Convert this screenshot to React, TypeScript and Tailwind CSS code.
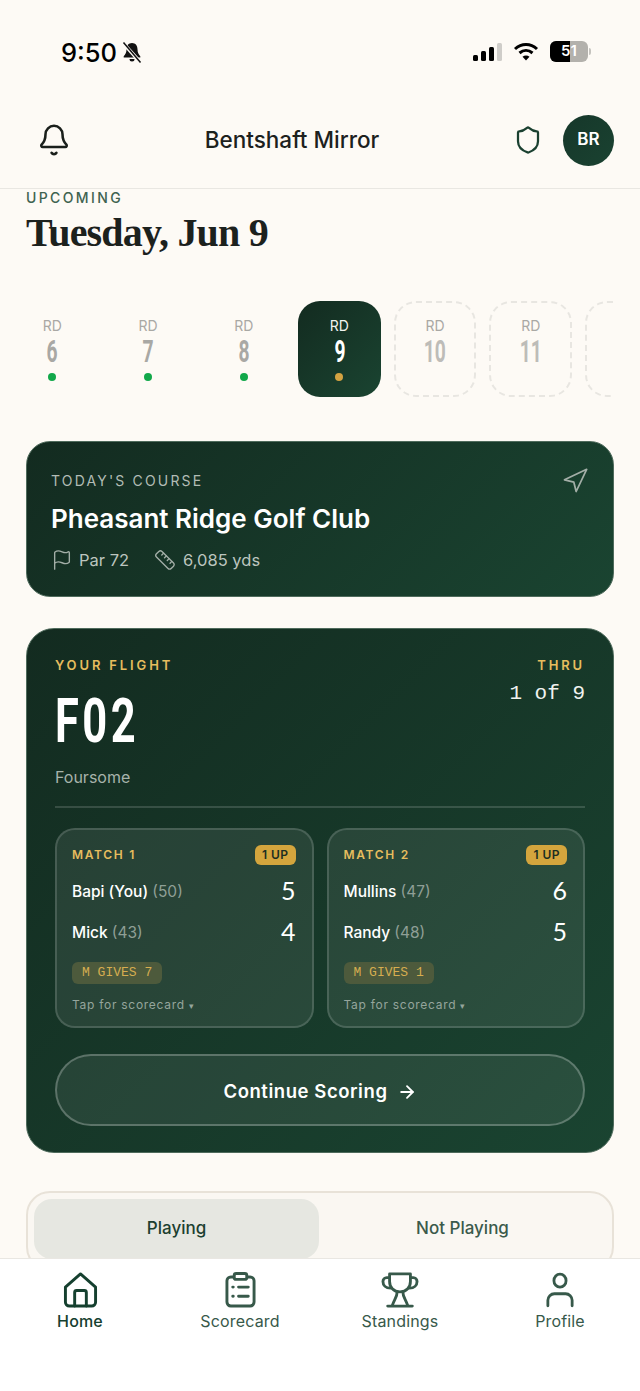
import React from 'react';
import { Bell, Shield, Flag, Ruler, Navigation, ArrowRight } from 'lucide-react';

const rounds = [
  { n: '6', state: 'done' },
  { n: '7', state: 'done' },
  { n: '8', state: 'done' },
  { n: '9', state: 'active' },
  { n: '10', state: 'future' },
  { n: '11', state: 'future' },
  { n: '', state: 'future' },
];

const StatusBar = () => (
  <div className="flex h-[90px] shrink-0 items-start justify-between pl-[61px] pr-[49px] pt-[38px]">
    <div className="flex items-center gap-[5px] text-black">
      <span className="text-[25.5px] font-medium leading-[30px] font-['Inter',sans-serif]">9:50</span>
      <svg width="20" height="22" viewBox="0 0 20 22" fill="#111" stroke="none">
        <path d="M10 1c-3.600 0-5.500 2.800-5.500 6.200 0 3.600-1.400 5.400-2.800 7v1.300h16.600v-1.300c-1.400-1.600-2.800-3.400-2.800-7C15.500 3.800 13.600 1 10 1z" />
        <path d="M7.500 17h5a2.500 2.500 0 0 1-5 0z" />
        <path d="M1.500 1.500l17 19" stroke="#fdfaf5" strokeWidth="3.500" />
        <path d="M1.500 0.500l17 20" stroke="#111" strokeWidth="1.500" />
      </svg>
    </div>
    <div className="flex items-center gap-[10px] pt-[3px]">
      <svg width="30" height="18" viewBox="0 0 30 18">
        <rect x="0" y="12" width="5" height="6" rx="1.500" fill="#000" />
        <rect x="8" y="8" width="5" height="10" rx="1.500" fill="#000" />
        <rect x="16" y="4" width="5" height="14" rx="1.500" fill="#000" />
        <rect x="24" y="0" width="5" height="18" rx="1.500" fill="#cfcdc9" />
      </svg>
      <svg width="26" height="19" viewBox="0 0 26 19" fill="none" stroke="#000" strokeWidth="3">
        <path d="M2 7c6.500-6 15.500-6 22 0" />
        <path d="M6.500 11c4-3.500 9-3.500 13 0" />
        <path d="M13 18.500l-3.500-3.800c2-1.600 5-1.600 7 0z" fill="#000" stroke="none" />
      </svg>
      <div className="flex items-center gap-[1px]">
        <div className="relative ml-[1px] flex h-[21px] w-[38px] overflow-hidden rounded-[6px] bg-[#b3b1ac]">
          <div className="h-full w-[20px] bg-black" />
          <span className="absolute inset-0 flex items-center justify-center text-[15px] font-semibold text-white font-['Inter',sans-serif]">51</span>
        </div>
        <div className="h-[7px] w-[2px] rounded-r bg-[#c5c3be]" />
      </div>
    </div>
  </div>
);

const Header = () => (
  <div className="flex h-[99px] shrink-0 items-center justify-between border-b border-[#e9e7e2] pl-[37px] pr-[26px] pt-[2px]">
    <Bell size={34} strokeWidth={1.8} className="text-[#1a1f1b]" />
    <div className="mt-[1px] text-[22.5px] font-medium leading-none text-[#1c211d]">Bentshaft Mirror</div>
    <div className="flex items-center gap-[20px]">
      <Shield size={30} strokeWidth={1.8} className="text-[#1a4030]" />
      <div className="flex h-[51px] w-[51px] items-center justify-center rounded-full bg-[linear-gradient(135deg,#16372a,#1a4231)] text-[17px] font-semibold text-white">BR</div>
    </div>
  </div>
);

const Rounds = () => (
  <div className="mr-[26px] mt-[44px] flex gap-[13px] overflow-hidden pl-[11px]">
    {rounds.map((r, i) => (
      <div
        key={i}
        className={
          r.state === 'active'
            ? 'flex h-[96px] w-[82.700px] shrink-0 flex-col items-center rounded-[22px] bg-[linear-gradient(135deg,#132b20,#1a4431)] pt-[16px]'
            : r.state === 'future'
              ? 'flex h-[96px] w-[82.700px] shrink-0 flex-col items-center rounded-[22px] border-2 border-dashed border-[#e8e6e1] pt-[14px]'
              : 'flex h-[96px] w-[82.700px] shrink-0 flex-col items-center pt-[16px]'
        }
      >
        {r.n !== '' && (
          <>
            <div className={`text-[14px] leading-[17px] ${r.state === 'active' ? 'text-[#f1f3f0]' : 'text-[#a9a8a4]'}`}>RD</div>
            <div className={`mt-[2px] scale-x-[0.62] text-[31px] font-bold leading-[32px] font-['Roboto',sans-serif] ${r.state === 'active' ? 'text-white' : r.state === 'future' ? 'text-[#bdbcb8]' : 'text-[#a9a8a4]'}`}>{r.n}</div>
          </>
        )}
        {r.state === 'done' && <div className="mt-[5px] h-[8px] w-[8px] rounded-full bg-[#12a84a]" />}
        {r.state === 'active' && <div className="mt-[5px] h-[8px] w-[8px] rounded-full bg-[#d4a342]" />}
      </div>
    ))}
  </div>
);

const CourseCard = () => (
  <div className="mx-[26px] mt-[44px] flex h-[156px] justify-between rounded-[24px] border border-[#4f6b5c] bg-[linear-gradient(135deg,#132b20,#1a4431)] pl-[24px] pr-[26px] pt-[30px]">
    <div>
      <div className="text-[14px] leading-[18px] tracking-[0.155em] text-[#b2bcb5]">TODAY'S COURSE</div>
      <div className="mt-[13px] text-[26px] font-semibold leading-[32px] text-white">Pheasant Ridge Golf Club</div>
      <div className="mt-[13px] flex items-center text-[16.500px] leading-[24px] text-[#bcc5bf]">
        <Flag size={22} strokeWidth={1.5} className="mr-[6px] text-[#a3aea7]" />
        <span>Par 72</span>
        <Ruler size={22} strokeWidth={1.5} className="ml-[25px] mr-[7px] text-[#a3aea7]" />
        <span>6,085 yds</span>
      </div>
    </div>
    <Navigation size={28} strokeWidth={1.5} className="-mr-[2px] -mt-[5px] text-[#a3aea7]" />
  </div>
);

const Player = ({ name, hcp, score, top }: { name: string; hcp: string; score: string; top: string }) => (
  <div className={`flex items-start justify-between ${top}`}>
    <div className="mt-[5px] text-[15.500px] font-medium leading-[24px] text-white">
      {name} <span className="font-normal text-[#8f9f96]">{hcp}</span>
    </div>
    <div className="text-[25px] leading-[30px] text-white font-['Lato',sans-serif]">{score}</div>
  </div>
);

const MatchCard = ({ title, p1, p2, gives }: { title: string; p1: [string, string, string]; p2: [string, string, string]; gives: string }) => (
  <div className="h-[200px] rounded-[20px] border-2 border-white/15 bg-white/[0.08] pl-[15px] pr-[16px] pt-[15px]">
    <div className="flex items-center justify-between">
      <div className="text-[12px] font-semibold tracking-[0.14em] text-[#e6bd5e]">{title}</div>
      <div className="rounded-[6px] bg-[#d4a53d] px-[7px] py-[1px] text-[12px] font-semibold tracking-[0.04em] text-[#1a2e22]">1 UP</div>
    </div>
    <Player name={p1[0]} hcp={p1[1]} score={p1[2]} top="mt-[10px]" />
    <Player name={p2[0]} hcp={p2[1]} score={p2[2]} top="mt-[11px]" />
    <div className="mt-[16px] inline-block rounded-[6px] bg-[#4d5a3c] px-[10px] py-[2px] text-[13px] leading-[18px] text-[#d6ad50] font-['Liberation_Mono',monospace]">{gives}</div>
    <div className="mt-[12px] text-[12px] tracking-[0.06em] text-[#95a59c]">Tap for scorecard <span className="text-[9px]">▾</span></div>
  </div>
);

const FlightCard = () => (
  <div className="mx-[26px] mt-[31px] h-[525px] rounded-[28px] border border-[#4f6b5c] bg-[linear-gradient(135deg,#132b20,#1a4431)] px-[28px] pt-[28px]">
    <div className="flex items-start justify-between">
      <div>
        <div className="text-[13px] font-semibold leading-[16px] tracking-[0.22em] text-[#e6bd5e]">YOUR FLIGHT</div>
        <div className="mt-[12px] w-[80px] origin-left scale-x-[0.7] whitespace-nowrap text-[62px] font-bold leading-[72px] tracking-[0.08em] text-white font-['Roboto',sans-serif]">F02</div>
        <div className="mt-[8px] text-[16px] leading-[24px] text-[#a7b3ab]">Foursome</div>
      </div>
      <div className="text-right">
        <div className="text-[13px] font-semibold leading-[16px] tracking-[0.22em] text-[#e6bd5e]">THRU</div>
        <div className="mt-[8px] text-[21px] leading-[26px] text-[#f0f2ef] font-['Liberation_Mono',monospace]">1 of 9</div>
      </div>
    </div>
    <div className="mt-[17px] h-[2px] bg-white/15" />
    <div className="mt-[20px] grid grid-cols-2 gap-[13px]">
      <MatchCard title="MATCH 1" p1={['Bapi (You)', '(50)', '5']} p2={['Mick', '(43)', '4']} gives="M GIVES 7" />
      <MatchCard title="MATCH 2" p1={['Mullins', '(47)', '6']} p2={['Randy', '(48)', '5']} gives="M GIVES 1" />
    </div>
    <div className="mt-[26px] flex h-[72px] items-center justify-center gap-[9px] rounded-full border-2 border-white/25 bg-white/[0.07] pt-[3px] text-[18.500px] font-semibold tracking-[0.03em] text-white">
      Continue Scoring <ArrowRight size={20} strokeWidth={2.2} />
    </div>
  </div>
);

const Toggle = () => (
  <div className="mx-[26px] mt-[38px] flex h-[80px] rounded-[24px] border-2 border-[#e8e2d8] bg-[#faf7f2] p-[6px]">
    <div className="flex h-[60px] w-[285px] items-center justify-center rounded-[18px] bg-[#e6e7e1] text-[17px] font-medium text-[#1c4030]">Playing</div>
    <div className="flex h-[60px] flex-1 items-center justify-center text-[17px] font-medium text-[#3b5a4b]">Not Playing</div>
  </div>
);

const HomeIcon = () => (
  <svg width="35" height="36" viewBox="0 0 36 37" fill="none" stroke="#15402f" strokeWidth="3" strokeLinejoin="round" strokeLinecap="round">
    <path d="M2.500 15.500L18 2l15.500 13.500V31a4 4 0 0 1-4 4h-23a4 4 0 0 1-4-4z" />
    <path d="M12 35V21a2 2 0 0 1 2-2h8a2 2 0 0 1 2 2v14" />
  </svg>
);

const ScoreIcon = () => (
  <svg width="31" height="36" viewBox="0 0 32 37" fill="none" stroke="#37594a" strokeWidth="3" strokeLinecap="round" strokeLinejoin="round">
    <rect x="2" y="5" width="28" height="30" rx="4" />
    <rect x="9.500" y="1.500" width="13" height="6" rx="2" fill="#fff" />
    <path d="M14 15.500h10M14 25h10" />
    <path d="M8 15.500h.5M8 25h.5" />
  </svg>
);

const TrophyIcon = () => (
  <svg width="38" height="36" viewBox="0 0 40 38" fill="none" stroke="#37594a" strokeWidth="3" strokeLinecap="round" strokeLinejoin="round">
    <path d="M9 2h22v8c0 6-4 11-11 11S9 16 9 10z" />
    <path d="M9 6H6a4 4 0 0 0-4 4c0 4 3 7 8 7M31 6h3a4 4 0 0 1 4 4c0 4-3 7-8 7" />
    <path d="M17 21c0 5-3 8-5 14M23 21c0 5 3 8 5 14" />
    <path d="M7 36h26" />
  </svg>
);

const UserIcon = () => (
  <svg width="28" height="36" viewBox="0 0 30 38" fill="none" stroke="#37594a" strokeWidth="3" strokeLinecap="round">
    <ellipse cx="15" cy="9" rx="6.500" ry="7" />
    <path d="M2 36v-6a7 7 0 0 1 7-7h12a7 7 0 0 1 7 7v6" />
  </svg>
);

const tabs = [
  { label: 'Home', icon: <HomeIcon />, cls: 'font-medium text-[#15402f]' },
  { label: 'Scorecard', icon: <ScoreIcon />, cls: 'text-[#37594a]' },
  { label: 'Standings', icon: <TrophyIcon />, cls: 'text-[#37594a]' },
  { label: 'Profile', icon: <UserIcon />, cls: 'text-[#37594a]' },
];

const BottomNav = () => (
  <div className="grid h-[133px] shrink-0 grid-cols-4 border-t border-[#e9e7e2] bg-white pt-[13px]">
    {tabs.map((t) => (
      <div key={t.label} className="flex flex-col items-center">
        <div className="flex h-[36px] items-center justify-center">{t.icon}</div>
        <div className={`mt-[1px] text-[16px] leading-[24px] tracking-[0.01em] ${t.cls}`}>{t.label}</div>
      </div>
    ))}
  </div>
);

export default function App() {
  return (
    <div className="flex h-[1391px] w-[640px] flex-col overflow-hidden bg-[#fdfaf5] font-['Inter',sans-serif]">
      <StatusBar />
      <Header />
      <div className="min-h-0 flex-1 overflow-hidden">
        <div className="pl-[26px] text-[14px] font-medium leading-[18px] tracking-[0.17em] text-[#3f6350]">UPCOMING</div>
        <div className="pl-[26px] mt-[2px] text-[40px] font-bold leading-[48px] tracking-[-0.8px] text-[#1c211d] font-['Liberation_Serif',serif]">Tuesday, Jun 9</div>
        <Rounds />
        <CourseCard />
        <FlightCard />
        <Toggle />
      </div>
      <BottomNav />
    </div>
  );
}
